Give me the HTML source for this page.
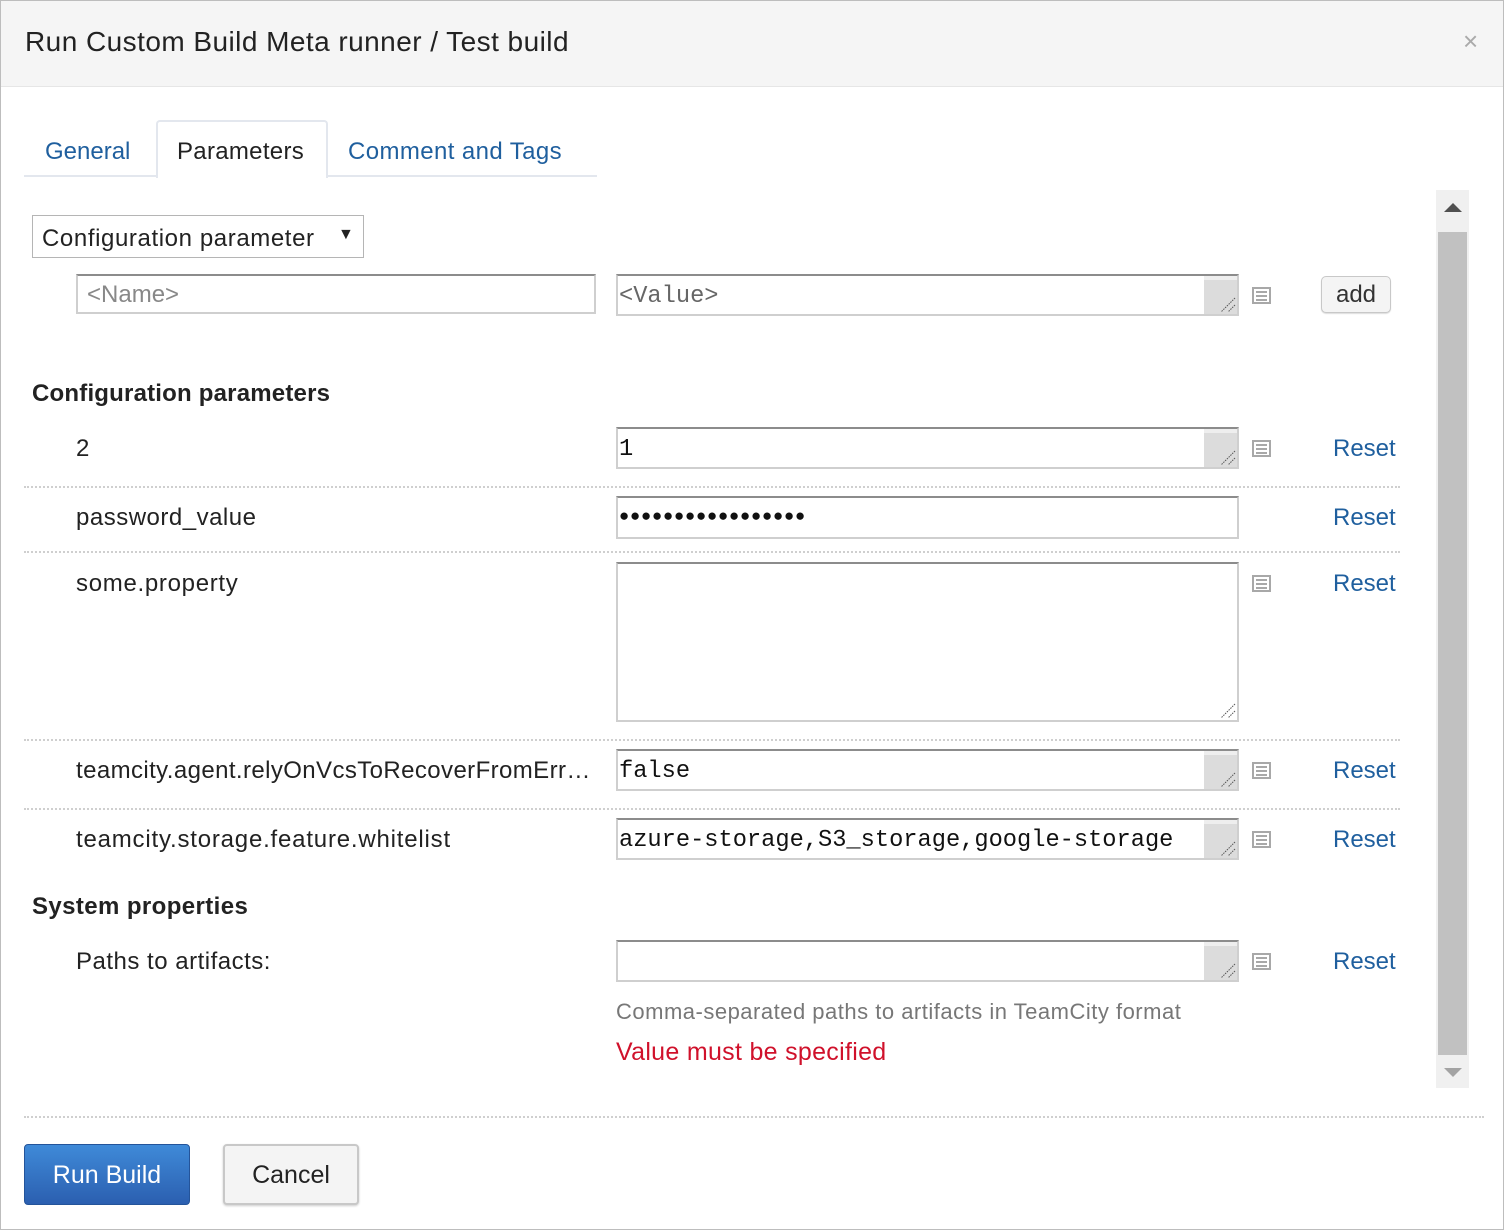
<!DOCTYPE html>
<html><head><meta charset="utf-8"><style>
*{box-sizing:border-box;margin:0;padding:0}
body{width:1504px;height:1230px;background:#fff;font-family:"Liberation Sans",sans-serif;color:#222;position:relative;overflow:hidden}
.frame{position:absolute;left:0;top:0;width:1504px;height:1230px;border:1px solid #bdbdbd}
.hdr{position:absolute;left:1px;top:1px;width:1502px;height:86px;background:#f5f5f5;border-bottom:1px solid #e6e6e6}
.a{position:absolute;white-space:nowrap}
.t{font-size:24px;line-height:28px;letter-spacing:0.3px}
.link{color:#1f5f9e;letter-spacing:0}
.inp{position:absolute;background:#fff;border:2px solid #cfcfcf;border-top-color:#8c8c8c;font-family:"Liberation Mono",monospace;font-size:23.7px;line-height:36px;padding-left:1px;padding-top:3px;color:#111;overflow:hidden;white-space:nowrap}
.rs{position:absolute;right:0;top:0;bottom:0;width:34px;background:#dcdcdc;border-left:1px solid #fff}
.rs:before{content:"";position:absolute;left:0;right:0;top:0;height:4px;background:#eee}
.rs svg{position:absolute;right:1px;bottom:1px}
.ic{position:absolute;width:19px;height:17px;border:2px solid #a8a8a8}
.ic:before{content:"";position:absolute;left:2px;right:2px;top:2px;height:2px;background:#a8a8a8;box-shadow:0 4px 0 #a8a8a8,0 8px 0 #a8a8a8}
.dot{position:absolute;left:24px;width:1376px;border-top:2px dotted #cfcfcf;height:0}
</style></head><body>
<div class="frame"></div>
<div class="hdr"></div>
<div class="a" style="left:25px;top:26px;font-size:28px;line-height:32px;color:#222;letter-spacing:0.45px">Run Custom Build Meta runner / Test build</div>
<div class="a" style="left:1463px;top:28px;font-size:26px;color:#aaa;line-height:26px">×</div>

<div class="a" style="left:24px;top:175px;width:573px;border-top:2px solid #e3e7ee"></div>
<div class="a" style="left:156px;top:120px;width:172px;height:58px;border:2px solid #e3e7ee;border-bottom:none;border-radius:4px 4px 0 0;background:#fff"></div>
<div class="a t link" style="left:45px;top:138px">General</div>
<div class="a t" style="left:177px;top:138px">Parameters</div>
<div class="a t link" style="left:348px;top:138px;letter-spacing:0.4px">Comment and Tags</div>

<div class="a" style="left:32px;top:215px;width:332px;height:43px;border:1px solid #b5b5b5"></div>
<div class="a t" style="left:42px;top:225px;letter-spacing:0.6px">Configuration parameter</div>
<div class="a" style="left:338px;top:226px;font-size:16px">▼</div>

<div class="inp" style="left:76px;top:274px;width:520px;height:40px;font-family:'Liberation Sans',sans-serif;font-size:24px;color:#888;padding-left:9px;padding-top:1px">&lt;Name&gt;</div>
<div class="inp" style="left:616px;top:274px;width:623px;height:42px;color:#666">&lt;Value&gt;<div class="rs"><svg width="18" height="18"><path d="M17 3L3 17M17 10L10 17" stroke="#555" stroke-width="1" stroke-dasharray="1.5 1"/></svg></div></div>
<div class="ic" style="left:1252px;top:287px"></div>
<div class="a" style="left:1321px;top:276px;width:70px;height:37px;border:1px solid #c8c8c8;border-radius:5px;background:#f4f4f4;box-shadow:0 1px 1px #ddd;text-align:center;font-size:24px;line-height:35px;color:#333">add</div>

<div class="a" style="left:32px;top:380px;font-size:24px;font-weight:bold;line-height:28px;letter-spacing:0.2px">Configuration parameters</div>

<div class="a t" style="left:76px;top:435px">2</div>
<div class="inp" style="left:616px;top:427px;width:623px;height:42px">1<div class="rs"><svg width="18" height="18"><path d="M17 3L3 17M17 10L10 17" stroke="#555" stroke-dasharray="1.5 1"/></svg></div></div>
<div class="ic" style="left:1252px;top:440px"></div>
<div class="a t link" style="left:1333px;top:435px">Reset</div>
<div class="dot" style="top:486px"></div>

<div class="a t" style="left:76px;top:504px;letter-spacing:0.5px">password_value</div>
<div class="inp" style="left:616px;top:496px;width:623px;height:43px;font-size:17px;letter-spacing:0.8px;line-height:40px;padding-top:0">●●●●●●●●●●●●●●●●●</div>
<div class="a t link" style="left:1333px;top:504px">Reset</div>
<div class="dot" style="top:551px"></div>

<div class="a t" style="left:76px;top:570px;letter-spacing:0.7px">some.property</div>
<div class="inp" style="left:616px;top:562px;width:623px;height:160px"><svg width="18" height="18" style="position:absolute;right:1px;bottom:1px"><path d="M17 3L3 17M17 10L10 17" stroke="#555" stroke-dasharray="1.5 1"/></svg></div>
<div class="ic" style="left:1252px;top:575px"></div>
<div class="a t link" style="left:1333px;top:570px">Reset</div>
<div class="dot" style="top:739px"></div>

<div class="a t" style="left:76px;top:757px;letter-spacing:0.4px">teamcity.agent.relyOnVcsToRecoverFromErr…</div>
<div class="inp" style="left:616px;top:749px;width:623px;height:42px">false<div class="rs"><svg width="18" height="18"><path d="M17 3L3 17M17 10L10 17" stroke="#555" stroke-dasharray="1.5 1"/></svg></div></div>
<div class="ic" style="left:1252px;top:762px"></div>
<div class="a t link" style="left:1333px;top:757px">Reset</div>
<div class="dot" style="top:808px"></div>

<div class="a t" style="left:76px;top:826px;letter-spacing:0.8px">teamcity.storage.feature.whitelist</div>
<div class="inp" style="left:616px;top:818px;width:623px;height:42px">azure-storage,S3_storage,google-storage<div class="rs"><svg width="18" height="18"><path d="M17 3L3 17M17 10L10 17" stroke="#555" stroke-dasharray="1.5 1"/></svg></div></div>
<div class="ic" style="left:1252px;top:831px"></div>
<div class="a t link" style="left:1333px;top:826px">Reset</div>

<div class="a" style="left:32px;top:893px;font-size:24px;font-weight:bold;line-height:28px;letter-spacing:0.4px">System properties</div>

<div class="a t" style="left:76px;top:948px;letter-spacing:0.5px">Paths to artifacts:</div>
<div class="inp" style="left:616px;top:940px;width:623px;height:42px"><div class="rs"><svg width="18" height="18"><path d="M17 3L3 17M17 10L10 17" stroke="#555" stroke-dasharray="1.5 1"/></svg></div></div>
<div class="ic" style="left:1252px;top:953px"></div>
<div class="a t link" style="left:1333px;top:948px">Reset</div>
<div class="a" style="left:616px;top:999px;font-size:22px;line-height:26px;color:#777;letter-spacing:0.5px">Comma-separated paths to artifacts in TeamCity format</div>
<div class="a" style="left:616px;top:1037px;font-size:25px;line-height:30px;color:#d0112b;letter-spacing:0.3px">Value must be specified</div>

<div class="a" style="left:1436px;top:190px;width:33px;height:898px;background:#f0f0f0"></div>
<div class="a" style="left:1438px;top:232px;width:29px;height:823px;background:#c1c1c1"></div>
<div class="a" style="left:1444px;top:203px;width:0;height:0;border-left:9px solid transparent;border-right:9px solid transparent;border-bottom:9px solid #505050"></div>
<div class="a" style="left:1444px;top:1068px;width:0;height:0;border-left:9px solid transparent;border-right:9px solid transparent;border-top:9px solid #a3a3a3"></div>

<div class="a" style="left:24px;top:1116px;width:1460px;border-top:2px dotted #cfcfcf"></div>
<div class="a" style="left:24px;top:1144px;width:166px;height:61px;border:1px solid #24549a;border-radius:4px;background:linear-gradient(#3f8ad8,#2b5fb0);color:#fff;text-align:center;font-size:25px;line-height:60px">Run Build</div>
<div class="a" style="left:223px;top:1144px;width:136px;height:61px;border:2px solid #c8c8c8;border-radius:4px;background:#f4f4f4;box-shadow:0 1px 2px #ccc;color:#222;text-align:center;font-size:25px;line-height:59px">Cancel</div>
</body></html>
